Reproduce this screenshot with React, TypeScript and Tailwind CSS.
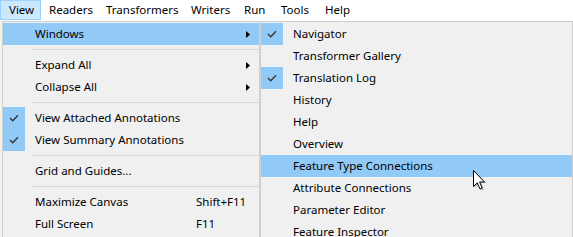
import React from "react";

type Item =
  | { kind: "sep" }
  | {
      kind: "item";
      label: string;
      checked?: boolean;
      submenu?: boolean;
      shortcut?: string;
      active?: boolean;
    };

const barItems = [
  { label: "View", w: "w-[41px]", open: true },
  { label: "Readers", w: "w-[57px]" },
  { label: "Transformers", w: "w-[85px]" },
  { label: "Writers", w: "w-[53px]" },
  { label: "Run", w: "w-[37px]" },
  { label: "Tools", w: "w-[44px]" },
  { label: "Help", w: "w-[44px]" },
];

const viewMenu: Item[] = [
  { kind: "item", label: "Windows", submenu: true, active: true },
  { kind: "sep" },
  { kind: "item", label: "Expand All", submenu: true },
  { kind: "item", label: "Collapse All", submenu: true },
  { kind: "sep" },
  { kind: "item", label: "View Attached Annotations", checked: true },
  { kind: "item", label: "View Summary Annotations", checked: true },
  { kind: "sep" },
  { kind: "item", label: "Grid and Guides..." },
  { kind: "sep" },
  { kind: "item", label: "Maximize Canvas", shortcut: "Shift+F11" },
  { kind: "item", label: "Full Screen", shortcut: "F11" },
];

const windowsMenu: Item[] = [
  { kind: "item", label: "Navigator", checked: true },
  { kind: "item", label: "Transformer Gallery" },
  { kind: "item", label: "Translation Log", checked: true },
  { kind: "item", label: "History" },
  { kind: "item", label: "Help" },
  { kind: "item", label: "Overview" },
  { kind: "item", label: "Feature Type Connections", active: true },
  { kind: "item", label: "Attribute Connections" },
  { kind: "item", label: "Parameter Editor" },
  { kind: "item", label: "Feature Inspector" },
];

const Check = () => (
  <svg width="10" height="8" viewBox="0 0 10 8" className="block">
    <polyline
      points="1,4 3.8,6.8 9,1.2"
      fill="none"
      stroke="#333"
      strokeWidth="1.3"
    />
  </svg>
);

const Arrow = () => (
  <svg width="4" height="7" viewBox="0 0 4 7" className="block">
    <polygon points="0,0 4,3.5 0,7" fill="#000" />
  </svg>
);

function MenuList({ items }: { items: Item[] }) {
  return (
    <div className="flex flex-col">
      {items.map((it, i) =>
        it.kind === "sep" ? (
          <div key={i} className="h-[9px] flex items-center pl-[28px]">
            <div className="h-px w-full bg-[#d7d7d7]" />
          </div>
        ) : (
          <div
            key={i}
            className={`relative h-[22px] flex items-center ${
              it.active ? "bg-[#91c9f7]" : ""
            }`}
          >
            <div
              className={`w-[22px] h-[22px] flex items-center justify-center shrink-0 ${
                it.checked ? "bg-[#91c9f7]" : ""
              }`}
            >
              {it.checked && <Check />}
            </div>
            <span className="ml-[10px] whitespace-nowrap">{it.label}</span>
            {it.shortcut && (
              <span className="absolute left-[193px] whitespace-nowrap">
                {it.shortcut}
              </span>
            )}
            {it.submenu && (
              <span className="absolute right-[9px] top-[8px]">
                <Arrow />
              </span>
            )}
          </div>
        )
      )}
    </div>
  );
}

export default function App() {
  return (
    <div
      className="relative w-[573px] h-[237px] overflow-hidden bg-[#f0f0f0] text-[11.5px] leading-none text-black"
      style={{ fontFamily: '"Noto Sans", "Liberation Sans", sans-serif' }}
    >
      {/* menu bar */}
      <div className="h-[21px] bg-white flex">
        {barItems.map((b) => (
          <div
            key={b.label}
            className={`${b.w} h-[20px] flex items-center pl-[8px] ${
              b.open ? "bg-[#cce8ff] border border-[#99d1ff] pl-[7px]" : ""
            }`}
          >
            {b.label}
          </div>
        ))}
      </div>

      <div className="flex">
        <div className="w-[2px] bg-[#f3f2ea]" />
        <div className="w-[258px] h-[240px] border border-[#cfcfcf] pt-[1px] bg-[#f0f0f0]">
          <MenuList items={viewMenu} />
        </div>
        <div className="flex-1 h-[240px] border border-[#cfcfcf] pt-[1px] bg-[#f0f0f0]">
          <MenuList items={windowsMenu} />
        </div>
      </div>

      {/* mouse pointer */}
      <svg
        width="14"
        height="22"
        viewBox="0 0 14 22"
        className="absolute left-[472px] top-[169px]"
      >
        <polygon
          points="2.5,2.5 2.5,19 6.5,15 9.5,21.5 12,20.5 9,14 14,14"
          fill="rgba(0,0,0,0.25)"
        />
        <polygon
          points="1.5,1.5 1.5,17.5 5.2,13.8 8,20 10.2,19 7.6,13 12.5,13"
          fill="#fff"
          stroke="#000"
          strokeWidth="1"
          strokeLinejoin="miter"
        />
      </svg>
    </div>
  );
}
